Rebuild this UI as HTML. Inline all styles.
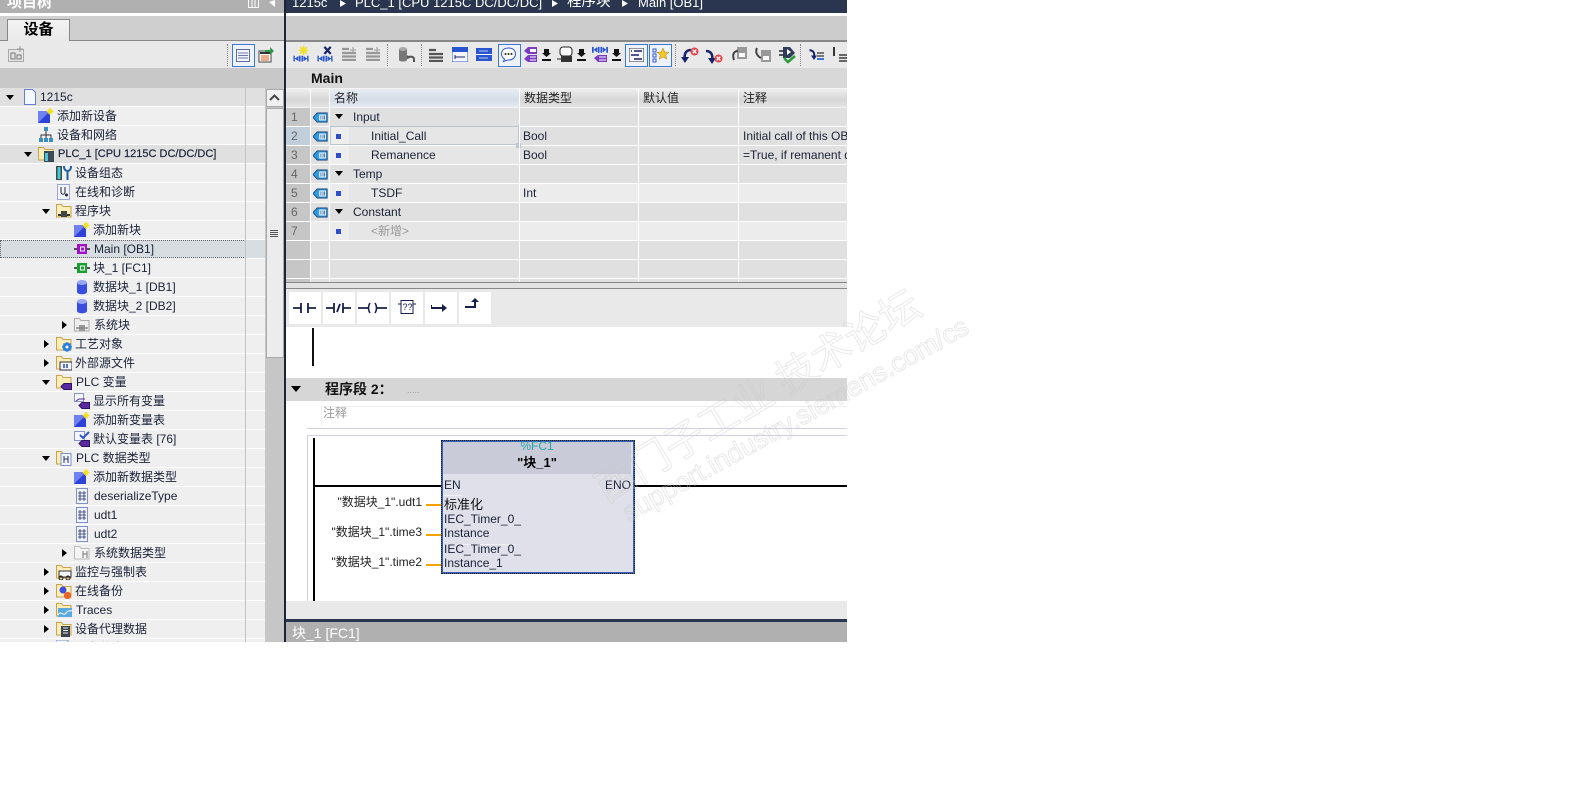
<!DOCTYPE html>
<html><head><meta charset="utf-8"><style>
html,body{margin:0;padding:0;background:#fff;width:1573px;height:810px;overflow:hidden}
#p{position:absolute;left:0;top:0;width:847px;height:642px;overflow:hidden;background:#fff;font:12px "Liberation Sans","Noto Sans CJK SC",sans-serif;color:#1a2238}
#p div,#p svg,#p span.a{position:absolute}
.r{left:0;width:245px;height:18px;background:#efefef;border-bottom:1px solid #fff}
.rb{left:245px;width:20px;height:18px;background:#efefef;border-bottom:1px solid #fff}
.t{white-space:nowrap;line-height:19px;height:19px}
.d{width:0;height:0;border-left:4.5px solid transparent;border-right:4.5px solid transparent;border-top:5px solid #000}
.ar{width:0;height:0;border-top:4.5px solid transparent;border-bottom:4.5px solid transparent;border-left:5px solid #000}
.i{width:16px;height:16px}
.c{height:18px;background:#e0e0e0;border-bottom:1px solid #fff}
.h{top:89px;height:18px;background:linear-gradient(#eee,#d6d6d6 60%,#e4e4e4);line-height:18px;text-indent:4px;color:#222}
.v{width:1px;background:#fff}
.b{top:292px;width:32px;height:32px;background:#fff}
.sel{border:1px solid #3b78d8;background:#eef3fb;width:21px;height:21px;top:44px}
.sep{width:0;top:44px;height:22px;border-left:1px dotted #888}
.wm{color:transparent;-webkit-text-stroke:1px rgba(200,200,200,.4);white-space:nowrap;transform-origin:0 100%}
.pin{color:#222;white-space:nowrap;line-height:14px}
</style></head><body>
<svg width="0" height="0" style="position:absolute"><defs>
<symbol id="add" viewBox="0 0 16 16"><rect x="0" y="3" width="12" height="12" fill="#2f42d8"/><path d="M0 3h12L0 15z" fill="#6f80f0"/><path d="M12 0v7M8.7 3.500h7M10 1.500l4 4M14 1.500l-4 4" stroke="#f2e21c" stroke-width="1.300"/></symbol>
<symbol id="fold" viewBox="0 0 16 16"><path d="M.5 14V1.500h5l1.500 2h8V14z" fill="#fbeeb8" stroke="#c9a24a"/></symbol>
<symbol id="ut" viewBox="0 0 16 16"><rect x="2.500" y=".5" width="11" height="15" fill="#f2f4fc" stroke="#7f8fc8"/><path d="M6 3v10M10 3v10M4 5h8M4 8h8M4 11h8" stroke="#25306a" fill="none" stroke-width=".8"/></symbol>
<symbol id="blk" viewBox="0 0 16 16"><path d="M0 8h3M13 8h3" stroke="#222" stroke-width="1.500"/><rect x="3" y="3" width="10" height="10" fill="currentColor"/><rect x="6.500" y="6" width="4" height="4" fill="none" stroke="#fff"/></symbol>
<symbol id="db" viewBox="0 0 16 16"><path d="M3 3.500v9.500c0 3 10 3 10 0V3.500z" fill="#3a4ee0"/><ellipse cx="8" cy="3.500" rx="5" ry="2.500" fill="#9aa8f4"/></symbol>
<symbol id="tag" viewBox="0 0 16 16"><path d="M5 12.500l3-3h7.500v6H8z" fill="#5c2aa0" stroke="#2d1360"/></symbol>
<symbol id="tagb" viewBox="0 0 18 13"><path d="M0 6.500L5 1h12v11H5z" fill="#2f9be0" stroke="#123a70"/><rect x="7.500" y="3" width="8" height="7" fill="#fff"/><path d="M9.500 4v5M12 4v5M14 4v5" stroke="#1a5aa0"/></symbol>
<symbol id="ii" viewBox="0 0 24 20"><path d="M1 9v9M10 9v9M14 9v9M23 9v9" stroke="#2a55d0" stroke-width="2.600"/><path d="M3 13.500h5M16 13.500h5M8 10.500l-4 3 4 3M16 10.500l4 3-4 3" stroke="#2a55d0" fill="none" stroke-width="2"/></symbol>
<symbol id="lines" viewBox="0 0 16 14"><path d="M1 2h7M1 6h14M1 9.500h14M1 13h14" stroke="#555" stroke-width="2.200"/></symbol>
<symbol id="redx" viewBox="0 0 10 10"><circle cx="5" cy="5" r="4.500" fill="#e0474c"/><path d="M3 3l4 4M7 3l-4 4" stroke="#fff" stroke-width="1.500"/></symbol>
<symbol id="arc" viewBox="0 0 12 16"><path d="M10 3C4 3 3 8 4 13" stroke="#17246a" stroke-width="2.600" fill="none"/><path d="M0 10l4 6 4-6z" fill="#17246a"/></symbol>
<symbol id="dl" viewBox="0 0 9 12"><path d="M2 0h5v4h2L4.500 8 0 4h2zM0 10h9v2H0z" fill="#111"/></symbol>
</defs></svg>
<div id="p">

<div style="left:0;top:0;width:284px;height:13px;background:#b0b0b0"></div>
<div class="t" style="left:7px;top:-7px;font-size:15px;color:#fff;font-weight:bold">项目树</div>
<svg style="left:248px;top:0" width="12" height="8"><path d="M.5 0v7.500h10V0M4 0v7M7 0v7" fill="none" stroke="#fff"/></svg>
<svg style="left:268px;top:0" width="9" height="8"><path d="M7 0v7L1 2z" fill="#fff"/></svg>
<div style="left:0;top:13px;width:284px;height:3px;background:#fff"></div>
<div style="left:0;top:16px;width:284px;height:24px;background:#cfcfcf"></div>
<div style="left:0;top:40px;width:284px;height:1px;background:#888"></div>
<div style="left:7px;top:19px;width:61px;height:21px;background:linear-gradient(#f3f3f3,#e9e9e9);border:1px solid #888;border-bottom:0;z-index:2;text-align:center;font-size:15px;line-height:20px;font-weight:bold;color:#000">设备</div>
<div style="left:0;top:41px;width:284px;height:27px;background:#e9e9e9"></div>
<svg style="left:8px;top:46px" width="16" height="16"><rect x=".5" y="3.500" width="15" height="12" fill="#e4e4e4" stroke="#aaa"/><path d="M3 7h4v6H3zM9 9h4v4H9z" fill="none" stroke="#777"/><path d="M12 0v6M9 3h6" stroke="#999"/></svg>
<div class="sep" style="left:227px"></div>
<div class="sel" style="left:232px"></div>
<svg style="left:236px;top:49px" width="14" height="13"><rect x=".5" y=".5" width="13" height="12" fill="#f4f6fc" stroke="#5d6ca8"/><path d="M2 4h10M2 6.500h10M2 9h10" stroke="#6a78a8"/></svg>
<svg style="left:258px;top:46px" width="17" height="17"><rect x="1" y="5" width="12" height="11" fill="#fff" stroke="#444"/><rect x="2" y="6" width="10" height="2" fill="#333"/><path d="M3 10h8M3 12h8M3 14h8" stroke="#d85b1c"/><path d="M7 4h5V1l4 4-4 4V6H7z" fill="#2c9a4a"/></svg>
<div style="left:0;top:68px;width:284px;height:20px;background:#c8c8c8"></div>

<div style="left:0;top:88px;width:284px;height:554px;background:#efefef"></div>
<div class="r" style="top:88px;background:#e0e0e0"></div><div class="rb" style="top:88px;background:#e0e0e0"></div>
<div class="r" style="top:107px"></div><div class="rb" style="top:107px"></div>
<div class="r" style="top:126px"></div><div class="rb" style="top:126px"></div>
<div class="r" style="top:145px;background:#e0e0e0"></div><div class="rb" style="top:145px;background:#e0e0e0"></div>
<div class="r" style="top:164px"></div><div class="rb" style="top:164px"></div>
<div class="r" style="top:183px"></div><div class="rb" style="top:183px"></div>
<div class="r" style="top:202px"></div><div class="rb" style="top:202px"></div>
<div class="r" style="top:221px"></div><div class="rb" style="top:221px"></div>
<div class="r" style="top:240px;background:#d8dde2;border:1px dotted #666;height:16px;width:244px"></div><div class="rb" style="top:240px;background:#d8dde2"></div>
<div class="r" style="top:259px"></div><div class="rb" style="top:259px"></div>
<div class="r" style="top:278px"></div><div class="rb" style="top:278px"></div>
<div class="r" style="top:297px"></div><div class="rb" style="top:297px"></div>
<div class="r" style="top:316px"></div><div class="rb" style="top:316px"></div>
<div class="r" style="top:335px"></div><div class="rb" style="top:335px"></div>
<div class="r" style="top:354px"></div><div class="rb" style="top:354px"></div>
<div class="r" style="top:373px"></div><div class="rb" style="top:373px"></div>
<div class="r" style="top:392px"></div><div class="rb" style="top:392px"></div>
<div class="r" style="top:411px"></div><div class="rb" style="top:411px"></div>
<div class="r" style="top:430px"></div><div class="rb" style="top:430px"></div>
<div class="r" style="top:449px"></div><div class="rb" style="top:449px"></div>
<div class="r" style="top:468px"></div><div class="rb" style="top:468px"></div>
<div class="r" style="top:487px"></div><div class="rb" style="top:487px"></div>
<div class="r" style="top:506px"></div><div class="rb" style="top:506px"></div>
<div class="r" style="top:525px"></div><div class="rb" style="top:525px"></div>
<div class="r" style="top:544px"></div><div class="rb" style="top:544px"></div>
<div class="r" style="top:563px"></div><div class="rb" style="top:563px"></div>
<div class="r" style="top:582px"></div><div class="rb" style="top:582px"></div>
<div class="r" style="top:601px"></div><div class="rb" style="top:601px"></div>
<div class="r" style="top:620px"></div><div class="rb" style="top:620px"></div>
<div style="left:245px;top:88px;width:1px;height:554px;background:#c4c4c4"></div>

<div class="d" style="left:6px;top:95px"></div>
<svg class="i" style="left:22px;top:89px"><path d="M2.500 .5h8l3 3v12h-11z" fill="#f4f8ff" stroke="#6a7fd0"/></svg>
<div class="t" style="left:40px;top:88px">1215c</div>

<svg class="i" style="left:38px;top:108px"><use href="#add"/></svg>
<div class="t" style="left:57px;top:107px">添加新设备</div>
<svg class="i" style="left:38px;top:127px"><path d="M8 4v4M3 12V8h10v4M8 8v4" stroke="#333" fill="none"/><rect x="6" y="0" width="4" height="4" fill="#3a8fc0"/><rect x="1" y="11" width="4" height="4" fill="#3a8fc0"/><rect x="6" y="11" width="4" height="4" fill="#3a8fc0"/><rect x="11" y="11" width="4" height="4" fill="#3a8fc0"/></svg>
<div class="t" style="left:57px;top:126px">设备和网络</div>
<div class="d" style="left:24px;top:152px"></div>
<svg class="i" style="left:38px;top:146px"><use href="#fold"/><rect x="6" y="5" width="10" height="11" fill="#3c4a5a"/><rect x="7" y="7" width="3" height="8" fill="#4fc6d8"/></svg>
<div class="t" style="left:58px;top:145px;font-size:11px;-webkit-text-stroke:.2px #1a2238">PLC_1 [CPU 1215C DC/DC/DC]</div>
<svg class="i" style="left:56px;top:165px"><rect x="0" y="1" width="6" height="14" fill="#444"/><rect x="1.500" y="2" width="3" height="12" fill="#39d0d8"/><path d="M8 1c0 4 2 5 3.500 5S15 5 15 1M11.500 6v9" stroke="#1f5f9a" stroke-width="2" fill="none"/></svg>
<div class="t" style="left:75px;top:164px">设备组态</div>
<svg class="i" style="left:57px;top:184px"><rect x=".5" y=".5" width="12" height="15" fill="#f2f4fb" stroke="#9aa6d8"/><path d="M4 3v5c0 3 4 3 4 0M8 3v5M8 11h3" stroke="#223" fill="none"/><circle cx="9.500" cy="11" r="1.500" fill="#223"/></svg>
<div class="t" style="left:75px;top:183px">在线和诊断</div>
<div class="d" style="left:42px;top:209px"></div>
<svg class="i" style="left:56px;top:203px"><use href="#fold"/><path d="M2 12h12" stroke="#333" stroke-width="2"/><rect x="5" y="8" width="6" height="6" fill="#444"/></svg>
<div class="t" style="left:75px;top:202px">程序块</div>
<svg class="i" style="left:74px;top:222px"><use href="#add"/></svg>
<div class="t" style="left:93px;top:221px">添加新块</div>
<svg class="i" style="left:74px;top:241px;color:#a010c8"><use href="#blk"/></svg>
<div class="t" style="left:94px;top:240px">Main [OB1]</div>
<svg class="i" style="left:74px;top:260px;color:#18a030"><use href="#blk"/></svg>
<div class="t" style="left:93px;top:259px">块_1 [FC1]</div>
<svg class="i" style="left:74px;top:279px"><use href="#db"/></svg>
<div class="t" style="left:93px;top:278px">数据块_1 [DB1]</div>
<svg class="i" style="left:74px;top:298px"><use href="#db"/></svg>
<div class="t" style="left:93px;top:297px">数据块_2 [DB2]</div>
<div class="ar" style="left:62px;top:321px"></div>
<svg class="i" style="left:74px;top:317px"><path d="M.5 14V1.500h5l1.500 2h8V14z" fill="#eee" stroke="#aaa"/><rect x="5" y="8" width="6" height="6" fill="#999"/><path d="M2 11h12" stroke="#888" stroke-width="1.500"/></svg>
<div class="t" style="left:94px;top:316px">系统块</div>
<div class="ar" style="left:44px;top:340px"></div>
<svg class="i" style="left:56px;top:336px"><use href="#fold"/><circle cx="11" cy="11" r="4.500" fill="#2b7fd8"/><path d="M11 6v10M6 11h10M7.500 7.500l7 7M14.500 7.500l-7 7" stroke="#2b7fd8"/><circle cx="11" cy="11" r="1.500" fill="#fff"/></svg>
<div class="t" style="left:75px;top:335px">工艺对象</div>
<div class="ar" style="left:44px;top:359px"></div>
<svg class="i" style="left:56px;top:355px"><use href="#fold"/><rect x="4" y="7" width="12" height="8" fill="#f4f6fb" stroke="#334"/><path d="M8 9v4M11 9v4" stroke="#234a9a" stroke-width="1.500"/></svg>
<div class="t" style="left:75px;top:354px">外部源文件</div>
<div class="d" style="left:42px;top:380px"></div>
<svg class="i" style="left:56px;top:374px"><use href="#fold"/><use href="#tag"/></svg>
<div class="t" style="left:76px;top:373px">PLC 变量</div>
<svg class="i" style="left:74px;top:393px"><rect x=".5" y=".5" width="9" height="8" fill="#f4f6fb" stroke="#8a94c8"/><path d="M2 8l3-2h6" stroke="#5c2aa0" fill="none"/><use href="#tag"/></svg>
<div class="t" style="left:93px;top:392px">显示所有变量</div>
<svg class="i" style="left:74px;top:412px"><use href="#add"/></svg>
<div class="t" style="left:93px;top:411px">添加新变量表</div>
<svg class="i" style="left:74px;top:431px"><rect x=".5" y=".5" width="10" height="9" fill="#f4f6fb" stroke="#8a94c8"/><use href="#tag"/><path d="M6 4l3 3 6-6" stroke="#2f55c0" stroke-width="2" fill="none"/></svg>
<div class="t" style="left:93px;top:430px">默认变量表 [76]</div>
<div class="d" style="left:42px;top:456px"></div>
<svg class="i" style="left:56px;top:450px"><use href="#fold"/><rect x="5" y="3.500" width="10" height="12" fill="#f2f4fc" stroke="#7f8fc8"/><path d="M8 6v7M12 6v7M8 9h4" stroke="#25306a"/></svg>
<div class="t" style="left:76px;top:449px">PLC 数据类型</div>
<svg class="i" style="left:74px;top:469px"><use href="#add"/></svg>
<div class="t" style="left:93px;top:468px">添加新数据类型</div>
<svg class="i" style="left:74px;top:488px"><use href="#ut"/></svg>
<div class="t" style="left:94px;top:487px">deserializeType</div>
<svg class="i" style="left:74px;top:507px"><use href="#ut"/></svg>
<div class="t" style="left:94px;top:506px">udt1</div>
<svg class="i" style="left:74px;top:526px"><use href="#ut"/></svg>
<div class="t" style="left:94px;top:525px">udt2</div>
<div class="ar" style="left:62px;top:549px"></div>
<svg class="i" style="left:74px;top:545px"><path d="M.5 14V1.500h5l1.500 2h8V14z" fill="#f4f4f4" stroke="#bbb"/><path d="M9 6v7M13 6v7M9 9h4" stroke="#777"/></svg>
<div class="t" style="left:94px;top:544px">系统数据类型</div>
<div class="ar" style="left:44px;top:568px"></div>
<svg class="i" style="left:56px;top:564px"><use href="#fold"/><rect x="3" y="7" width="12" height="6" fill="#f4f6fb" stroke="#334"/><circle cx="5" cy="14" r="2" fill="none" stroke="#222"/><circle cx="12" cy="14" r="2" fill="none" stroke="#222"/></svg>
<div class="t" style="left:75px;top:563px">监控与强制表</div>
<div class="ar" style="left:44px;top:587px"></div>
<svg class="i" style="left:56px;top:583px"><use href="#fold"/><ellipse cx="7" cy="7" rx="3.500" ry="3.500" fill="#3a4ee0"/><rect x="8" y="9" width="7" height="7" rx="3" fill="#e8622a"/></svg>
<div class="t" style="left:75px;top:582px">在线备份</div>
<div class="ar" style="left:44px;top:606px"></div>
<svg class="i" style="left:56px;top:602px"><use href="#fold"/><rect x="2" y="6" width="14" height="9" fill="#5aa8e0"/><path d="M2 13c3-5 5 1 7-1s3-4 7-3" stroke="#fff" fill="none"/></svg>
<div class="t" style="left:76px;top:601px">Traces</div>
<div class="ar" style="left:44px;top:625px"></div>
<svg class="i" style="left:56px;top:621px"><use href="#fold"/><rect x="5" y="5" width="9" height="11" fill="#3a4550"/><path d="M7 7h5M7 9.500h5M7 12h5" stroke="#e8e8e8"/></svg>
<div class="t" style="left:75px;top:620px">设备代理数据</div>
<svg class="i" style="left:56px;top:640px"><rect x="0" y="0" width="12" height="8" fill="#f2f4fc" stroke="#7f8fc8"/></svg>
<div class="t" style="left:76px;top:639px">设备信息</div>

<div style="left:265px;top:88px;width:19px;height:554px;background:#c6c6c6"></div>
<div style="left:266px;top:89px;width:16px;height:16px;background:#f0f0f0;border:1px solid #aaa"></div>
<svg style="left:269px;top:94px" width="11" height="7"><path d="M1 6l4.500-4.500L10 6" stroke="#444" stroke-width="2" fill="none"/></svg>
<div style="left:266px;top:108px;width:16px;height:248px;background:#ececec;border:1px solid #aaa"></div>
<div style="left:270px;top:230px;width:8px;height:1px;background:#555"></div>
<div style="left:270px;top:232px;width:8px;height:1px;background:#555"></div>
<div style="left:270px;top:234px;width:8px;height:1px;background:#555"></div>
<div style="left:270px;top:236px;width:8px;height:1px;background:#555"></div>

<div style="left:284px;top:0;width:2px;height:642px;background:#1c2438"></div>

<div style="left:286px;top:0;width:561px;height:13px;background:#2a3550"></div>
<div class="t" style="left:292px;top:-7px;color:#fff;font-size:13px;white-space:pre">1215c</div>
<svg style="left:340px;top:0" width="6" height="8"><path d="M0 0l6 3.500L0 7z" fill="#fff"/></svg>
<div class="t" style="left:355px;top:-7px;color:#fff;font-size:13px">PLC_1 [CPU 1215C DC/DC/DC]</div>
<svg style="left:552px;top:0" width="6" height="8"><path d="M0 0l6 3.500L0 7z" fill="#fff"/></svg>
<div class="t" style="left:567px;top:-7px;color:#fff;font-size:14.500px">程序块</div>
<svg style="left:622px;top:0" width="6" height="8"><path d="M0 0l6 3.500L0 7z" fill="#fff"/></svg>
<div class="t" style="left:638px;top:-7px;color:#fff;font-size:13px">Main [OB1]</div>
<div style="left:286px;top:13px;width:561px;height:3px;background:#fff"></div>
<div style="left:286px;top:16px;width:561px;height:24px;background:#cccccc"></div>
<div style="left:286px;top:40px;width:561px;height:2px;background:#888"></div>
<div style="left:286px;top:42px;width:561px;height:26px;background:#e9e9e9"></div>
<div style="left:286px;top:68px;width:561px;height:21px;background:#d8d8d8"></div>
<div class="t" style="left:311px;top:69px;font-size:14px;color:#111;font-weight:bold">Main</div>

<svg style="left:293px;top:45px" width="16" height="19" viewBox="0 0 24 30"><use href="#ii" y="8" width="24" height="20"/><path d="M16 1v15M8.500 8.500h15M11 3.500l10 10M21 3.500l-10 10" stroke="#f0e020" stroke-width="2.500"/></svg>
<svg style="left:317px;top:45px" width="16" height="19" viewBox="0 0 24 30"><use href="#ii" y="8" width="24" height="20"/><path d="M11 3l10 11M21 3L11 14" stroke="#17246a" stroke-width="3.500"/></svg>
<svg style="left:341px;top:47px" width="16" height="14"><use href="#lines" opacity=".55"/><path d="M12 0v6M9 3h6" stroke="#999"/></svg>
<svg style="left:365px;top:47px" width="16" height="14"><use href="#lines" opacity=".55"/><path d="M12 0v6M9 3h6" stroke="#999"/></svg>
<div class="sep" style="left:387px"></div>
<svg style="left:399px;top:46px" width="16" height="18"><path d="M0 3v11c0 2 8 2 8 0V3z" fill="#777"/><ellipse cx="4" cy="3" rx="4" ry="2" fill="#aaa"/><path d="M15 16v-3c0-2-3-3-6-2" stroke="#555" stroke-width="2" fill="none"/><path d="M8 9v4l3-1z" fill="#555"/></svg>
<div class="sep" style="left:421px"></div>
<svg style="left:428px;top:48px" width="16" height="14"><use href="#lines"/></svg>
<svg style="left:452px;top:47px" width="16" height="15"><rect width="16" height="15" fill="#f4f6fc" stroke="#2a55d0"/><rect width="16" height="5" fill="#2a55d0"/><path d="M3 10h10M3 8v4" stroke="#17246a"/></svg>
<svg style="left:476px;top:48px" width="16" height="13"><rect width="16" height="13" fill="#2a55d0"/><path d="M0 6.500h16" stroke="#fff"/><path d="M3 3h9M3 10h9" stroke="#bcd"/></svg>
<div class="sel" style="left:498px"></div>
<svg style="left:501px;top:47px" width="15" height="15"><path d="M7.500 1C3 1 .5 3.500.5 7c0 2.500 1.500 4 3 5l-1 2.500 4-1.500h1c4 0 7-2.500 7-6S12 1 7.500 1z" fill="#fff" stroke="#2a55d0"/><circle cx="4.500" cy="7" r="1" fill="#222"/><circle cx="7.500" cy="7" r="1" fill="#222"/><circle cx="10.500" cy="7" r="1" fill="#222"/></svg>
<svg style="left:522px;top:46px" width="16" height="18"><path d="M2 5L6 1h9v7H6z" fill="#7a3bc0"/><rect x="8" y="3" width="6" height="3" fill="#fff"/><path d="M2 13l4-4h9v7H6z" fill="#7a3bc0"/><path d="M8 11h6M8 14h6" stroke="#fff"/></svg>
<svg style="left:542px;top:49px" width="9" height="12"><use href="#dl"/></svg>
<svg style="left:557px;top:46px" width="16" height="18"><rect x="3" y="1" width="12" height="9" rx="3" fill="#fff" stroke="#222"/><rect x="4" y="10" width="11" height="6" fill="#333"/><path d="M0 13h4" stroke="#222"/></svg>
<svg style="left:577px;top:49px" width="9" height="12"><use href="#dl"/></svg>
<svg style="left:592px;top:46px" width="16" height="18" viewBox="0 0 16 18"><use href="#ii" width="16" height="13" y="-5"/><path d="M2 12l4-3h9v7H6z" fill="#7a3bc0"/><path d="M7 11h7M7 14h7" stroke="#fff"/></svg>
<svg style="left:612px;top:49px" width="9" height="12"><use href="#dl"/></svg>
<div class="sel" style="left:625px"></div>
<svg style="left:629px;top:48px" width="15" height="14"><rect width="15" height="14" fill="#f4f6fc" stroke="#334"/><path d="M2 3h1M5 3h8M2 7h8M5 11h8" stroke="#17246a" stroke-width="1.500"/></svg>
<div class="sel" style="left:649px"></div>
<svg style="left:652px;top:46px" width="17" height="18"><path d="M1 3h3v3H1zM1 8h3v3H1zM1 13h3v3H1z" fill="#fff" stroke="#2a55d0"/><path d="M11 2l1.800 4 4.200.3-3.200 2.700 1 4.200L11 11l-3.800 2.200 1-4.200L5 6.300 9.200 6z" fill="#f2c52e" stroke="#a8841a" stroke-width=".5"/></svg>
<div class="sep" style="left:675px"></div>
<svg style="left:681px;top:47px" width="12" height="16"><use href="#arc"/></svg>
<svg style="left:690px;top:47px" width="9" height="9"><use href="#redx"/></svg>
<svg style="left:704px;top:48px" width="12" height="16"><use href="#arc" transform="matrix(-1 0 0 1 12 0)"/></svg>
<svg style="left:714px;top:54px" width="9" height="9"><use href="#redx"/></svg>
<svg style="left:731px;top:46px" width="16" height="18"><rect x="6" y="1" width="10" height="12" fill="#999"/><rect x="8" y="7" width="6" height="4" fill="#fff"/><path d="M7 5C3 5 1 8 3 14" stroke="#444" stroke-width="2" fill="none"/></svg>
<svg style="left:755px;top:46px" width="16" height="18"><rect x="6" y="4" width="10" height="12" fill="#999"/><rect x="8" y="10" width="6" height="4" fill="#fff"/><path d="M2 2C0 6 2 10 6 12" stroke="#444" stroke-width="2" fill="none"/></svg>
<svg style="left:779px;top:46px" width="17" height="18"><path d="M0 5h4M0 9h4" stroke="#223" stroke-width="1.500"/><path d="M4 1h7l5 6-5 5H4z" fill="#2e3c58"/><path d="M8 3v6l4-3z" fill="#fff"/><path d="M5 12l4 4 7-6" stroke="#2c9a3a" stroke-width="2.500" fill="none"/></svg>
<div class="sep" style="left:800px"></div>
<svg style="left:808px;top:47px" width="16" height="16"><g transform="matrix(-1 0 0 1 9 0)"><use href="#arc" width="9" height="14"/></g><path d="M9 6h7M9 9h7" stroke="#777" stroke-width="2"/><path d="M9 12h7" stroke="#3b78d8" stroke-width="2"/></svg>
<svg style="left:832px;top:46px" width="15" height="18"><path d="M2 1v9" stroke="#333" stroke-width="2"/><path d="M7 9h8M7 12h8M7 15h8" stroke="#666" stroke-width="2"/></svg>

<div style="left:286px;top:88px;width:561px;height:20px;background:#f4f4f4"></div>
<div class="h" style="left:286px;width:24px"></div>
<div class="h" style="left:311px;width:18px"></div>
<div class="h" style="left:330px;width:189px;background:linear-gradient(#e8edf4,#d6dde8 60%,#e6ebf2)">名称</div>
<div class="h" style="left:520px;width:118px">数据类型</div>
<div class="h" style="left:639px;width:99px">默认值</div>
<div class="h" style="left:739px;width:108px">注释</div>

<div style="left:286px;top:108px;width:24px;height:174px;background:#c6c6c6"></div>
<div style="left:311px;top:108px;width:536px;height:174px;background:#e0e0e0"></div>
<div style="left:286px;top:126px;width:561px;height:1px;background:#fff"></div>
<div style="left:286px;top:145px;width:561px;height:1px;background:#fff"></div>
<div style="left:286px;top:164px;width:561px;height:1px;background:#fff"></div>
<div style="left:286px;top:183px;width:561px;height:1px;background:#fff"></div>
<div style="left:286px;top:202px;width:561px;height:1px;background:#fff"></div>
<div style="left:286px;top:221px;width:561px;height:1px;background:#fff"></div>
<div style="left:286px;top:240px;width:561px;height:1px;background:#fff"></div>
<div style="left:286px;top:259px;width:561px;height:1px;background:#fff"></div>
<div style="left:286px;top:278px;width:561px;height:1px;background:#fff"></div>
<div style="left:286px;top:127px;width:24px;height:18px;background:#c2ced9"></div>
<div style="left:330px;top:127px;width:189px;height:18px;background:#e6e6e6"></div>
<div style="left:330px;top:127px;width:19px;height:18px;background:#eeeeee"></div>
<div style="left:330px;top:146px;width:19px;height:18px;background:#eeeeee"></div>
<div style="left:349px;top:146px;width:170px;height:18px;background:#e6e6e6"></div>
<div style="left:311px;top:184px;width:536px;height:18px;background:#ececec"></div>
<div style="left:349px;top:184px;width:170px;height:18px;background:#e6e6e6"></div>
<div style="left:311px;top:222px;width:536px;height:18px;background:#ececec"></div>
<div style="left:349px;top:222px;width:170px;height:18px;background:#e6e6e6"></div>
<div style="left:330px;top:126px;width:189px;height:19px;border:1px solid #bac4cc;box-sizing:border-box"></div>
<div style="left:516px;top:143px;width:5px;height:5px;background:#bcc8d6"></div>
<div class="v" style="left:310px;top:89px;height:193px"></div>
<div class="v" style="left:329px;top:89px;height:193px"></div>
<div class="v" style="left:519px;top:89px;height:193px"></div>
<div class="v" style="left:638px;top:89px;height:193px"></div>
<div class="v" style="left:738px;top:89px;height:193px"></div>

<div class="t" style="left:291px;top:108px;color:#666">1</div>
<div class="t" style="left:291px;top:127px;color:#666">2</div>
<div class="t" style="left:291px;top:146px;color:#666">3</div>
<div class="t" style="left:291px;top:165px;color:#666">4</div>
<div class="t" style="left:291px;top:184px;color:#666">5</div>
<div class="t" style="left:291px;top:203px;color:#666">6</div>
<div class="t" style="left:291px;top:222px;color:#666">7</div>
<svg style="left:313px;top:112px" width="15" height="11"><use href="#tagb"/></svg>
<svg style="left:313px;top:131px" width="15" height="11"><use href="#tagb"/></svg>
<svg style="left:313px;top:150px" width="15" height="11"><use href="#tagb"/></svg>
<svg style="left:313px;top:169px" width="15" height="11"><use href="#tagb"/></svg>
<svg style="left:313px;top:188px" width="15" height="11"><use href="#tagb"/></svg>
<svg style="left:313px;top:207px" width="15" height="11"><use href="#tagb"/></svg>
<div class="d" style="left:335px;top:114px"></div>
<div class="d" style="left:335px;top:171px"></div>
<div class="d" style="left:335px;top:209px"></div>
<div style="left:336px;top:134px;width:5px;height:5px;background:#2a4fc8"></div>
<div style="left:336px;top:153px;width:5px;height:5px;background:#2a4fc8"></div>
<div style="left:336px;top:191px;width:5px;height:5px;background:#2a4fc8"></div>
<div style="left:336px;top:229px;width:5px;height:5px;background:#2a4fc8"></div>
<div class="t" style="left:353px;top:108px">Input</div>
<div class="t" style="left:371px;top:127px">Initial_Call</div>
<div class="t" style="left:371px;top:146px">Remanence</div>
<div class="t" style="left:353px;top:165px">Temp</div>
<div class="t" style="left:371px;top:184px">TSDF</div>
<div class="t" style="left:353px;top:203px">Constant</div>
<div class="t" style="left:371px;top:222px;color:#999">&lt;新增&gt;</div>
<div class="t" style="left:523px;top:127px">Bool</div>
<div class="t" style="left:523px;top:146px">Bool</div>
<div class="t" style="left:523px;top:184px">Int</div>
<div class="t" style="left:743px;top:127px">Initial call of this OB</div>
<div class="t" style="left:743px;top:146px">=True, if remanent data</div>

<div style="left:286px;top:282px;width:561px;height:7px;background:#e2e2e2;border-top:1px solid #888;border-bottom:1px solid #888;box-sizing:border-box"></div>
<div style="left:286px;top:289px;width:561px;height:38px;background:#e9e9e9"></div>
<div class="b" style="left:289px"></div><div class="b" style="left:323px"></div><div class="b" style="left:357px"></div><div class="b" style="left:391px"></div><div class="b" style="left:425px"></div><div class="b" style="left:459px"></div>
<svg style="left:293px;top:302px" width="24" height="12"><path d="M0 6h8M8 1v10M15 1v10M15 6h8" stroke="#17204a" stroke-width="1.800"/></svg>
<svg style="left:326px;top:302px" width="26" height="12"><path d="M0 6h8M8 1v10M17 1v10M17 6h8M14 2l-3 8" stroke="#17204a" stroke-width="1.800"/></svg>
<svg style="left:358px;top:302px" width="29" height="12"><path d="M0 6h10M19 6h10" stroke="#17204a" stroke-width="1.800"/><path d="M12 1c-2 3-2 7 0 10M17 1c2 3 2 7 0 10" stroke="#17204a" stroke-width="1.500" fill="none"/></svg>
<svg style="left:398px;top:299px" width="18" height="16"><rect x="3" y="1.500" width="12" height="13" fill="#fff" stroke="#17204a"/><path d="M0 5h3M15 5h3" stroke="#17204a"/><text x="4.500" y="11" font-size="9" font-family="Liberation Sans" fill="#17204a">??</text></svg>
<svg style="left:431px;top:302px" width="16" height="12"><path d="M0 3h0v3h13" stroke="#17204a" stroke-width="2" fill="none"/><path d="M11 2l5 4-5 4z" fill="#17204a"/></svg>
<svg style="left:465px;top:298px" width="16" height="12"><path d="M0 9h10V3" stroke="#17204a" stroke-width="2" fill="none"/><path d="M6 4l4-4 4 4z" fill="#17204a"/></svg>

<div style="left:286px;top:327px;width:561px;height:51px;background:#fff"></div>
<div style="left:312px;top:328px;width:2px;height:38px;background:#111"></div>
<div style="left:286px;top:378px;width:561px;height:23px;background:#d6d6d6"></div>
<div class="d" style="left:291px;top:386px;border-left-width:5.500px;border-right-width:5.500px;border-top-width:6px"></div>
<div class="t" style="left:325px;top:379px;font-size:14px;font-weight:bold;color:#111;line-height:20px">程序段 2：</div>
<div class="t" style="left:407px;top:381px;font-size:9px;color:#999">.....</div>
<div style="left:321px;top:406px;width:526px;height:1px;background:#eee"></div>
<div style="left:321px;top:406px;width:1px;height:20px;background:#eee"></div>
<div class="t" style="left:323px;top:404px;color:#999">注释</div>
<div style="left:307px;top:428px;width:540px;height:1px;background:#cfcfe6"></div>
<div style="left:307px;top:435px;width:540px;height:1px;background:#cfcfe6"></div>
<div style="left:307px;top:435px;width:1px;height:166px;background:#cfcfe6"></div>
<div style="left:313px;top:438px;width:2px;height:163px;background:#000"></div>
<div style="left:315px;top:485px;width:126px;height:2px;background:#000"></div>
<div style="left:633px;top:485px;width:214px;height:2px;background:#000"></div>
<div style="left:426px;top:504px;width:15px;height:2px;background:#f5a300"></div>
<div style="left:426px;top:534px;width:15px;height:2px;background:#f5a300"></div>
<div style="left:426px;top:564px;width:15px;height:2px;background:#f5a300"></div>
<div class="t" style="left:280px;width:142px;text-align:right;top:493px;color:#222">"数据块_1".udt1</div>
<div class="t" style="left:280px;width:142px;text-align:right;top:523px;color:#222">"数据块_1".time3</div>
<div class="t" style="left:280px;width:142px;text-align:right;top:553px;color:#222">"数据块_1".time2</div>

<div style="left:441px;top:440px;width:190px;height:130px;background:#dfe0e9;border:2px solid #3a60b0;outline:1px dotted #222;outline-offset:-1px"></div>
<div style="left:443px;top:442px;width:188px;height:32px;background:#c9cbd9"></div>
<div class="t" style="left:443px;width:188px;top:437px;text-align:center;color:#2aa6a6">%FC1</div>
<div class="t" style="left:443px;width:188px;top:453px;text-align:center;color:#000;font-weight:bold;font-size:13px">"块_1"</div>
<div class="t" style="left:444px;top:476px">EN</div>
<div class="t" style="left:605px;top:476px">ENO</div>
<div style="left:444px;top:495px;width:18px;height:1px;background:#f0f0f4"></div>
<div class="t" style="left:444px;top:495px;color:#111;font-size:13px">标准化</div>
<div class="t" style="left:444px;top:510px">IEC_Timer_0_</div>
<div class="t" style="left:444px;top:524px">Instance</div>
<div style="left:444px;top:544px;width:72px;height:1px;background:#f0f0f4"></div>
<div class="t" style="left:444px;top:540px">IEC_Timer_0_</div>
<div class="t" style="left:444px;top:554px">Instance_1</div>

<div style="left:286px;top:601px;width:561px;height:18px;background:#e9e9e9"></div>
<div style="left:286px;top:619px;width:561px;height:3px;background:#2a3550"></div>
<div style="left:286px;top:622px;width:561px;height:20px;background:#b0b0b0"></div>
<div class="t" style="left:292px;top:624px;color:#fff;font-size:14px">块_1 [FC1]</div>
</div>
<div class="wm" style="position:absolute;left:612px;top:456px;font:40px 'Liberation Sans','Noto Sans CJK SC',sans-serif;transform:rotate(-31deg)">西门子工业&nbsp;技术论坛</div>
<div class="wm" style="position:absolute;left:632px;top:497px;font:27px 'Liberation Sans',sans-serif;transform:rotate(-29deg)">support.industry.siemens.com/cs</div>
</body></html>
